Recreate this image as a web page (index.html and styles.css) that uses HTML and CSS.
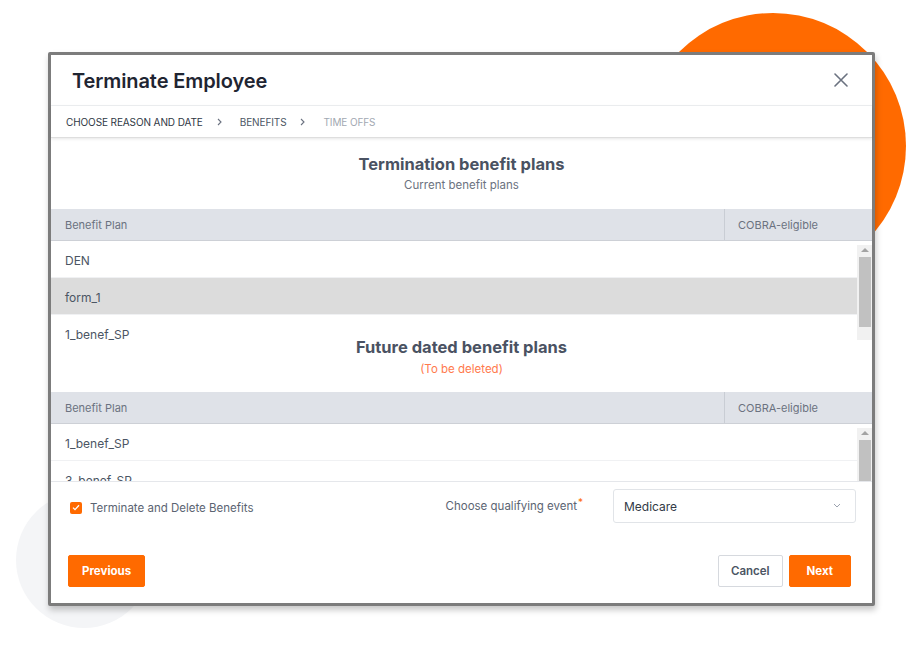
FILE: index.html
```html
<!DOCTYPE html>
<html lang="en">
<head>
<meta charset="utf-8">
<title>Terminate Employee</title>
<link rel="stylesheet" href="styles.css">
</head>
<body>
<div class="page">
  <div class="blob blob-orange"></div>
  <div class="blob blob-gray"></div>
  <div class="modal">
    <div class="modal-header">
      <h1 class="modal-title">Terminate Employee</h1>
      <span class="close" aria-label="Close">
        <svg width="14" height="14" viewBox="0 0 14 14"><path d="M1 1L13 13M13 1L1 13" stroke="#6b7280" stroke-width="1.6" stroke-linecap="round" fill="none"/></svg>
      </span>
    </div>
    <nav class="steps">
      <span class="step step-done">CHOOSE REASON AND DATE</span>
      <svg class="step-sep" width="5" height="8" viewBox="0 0 5 8"><path d="M1 1L4 4L1 7" stroke="#6b7280" stroke-width="1.1" fill="none"/></svg>
      <span class="step step-current">BENEFITS</span>
      <svg class="step-sep" width="5" height="8" viewBox="0 0 5 8"><path d="M1 1L4 4L1 7" stroke="#6b7280" stroke-width="1.1" fill="none"/></svg>
      <span class="step step-next">TIME OFFS</span>
    </nav>

    <section class="plans plans-current">
      <h2 class="plans-title">Termination benefit plans</h2>
      <p class="plans-sub">Current benefit plans</p>
      <div class="table">
        <div class="thead">
          <div class="th th-plan">Benefit Plan</div>
          <div class="th th-cobra">COBRA-eligible</div>
        </div>
        <div class="tbody tbody-tall">
          <div class="rows">
            <div class="row">DEN</div>
            <div class="row row-selected">form_1</div>
            <div class="row">1_benef_SP</div>
          </div>
          <div class="scrollbar">
            <span class="sb-arrow"></span>
            <span class="sb-thumb sb-thumb-a"></span>
          </div>
        </div>
      </div>
    </section>

    <section class="plans plans-future">
      <h2 class="plans-title plans-title-tight">Future dated benefit plans</h2>
      <p class="plans-sub plans-warn">(To be deleted)</p>
      <div class="table">
        <div class="thead">
          <div class="th th-plan">Benefit Plan</div>
          <div class="th th-cobra">COBRA-eligible</div>
        </div>
        <div class="tbody tbody-short">
          <div class="rows">
            <div class="row">1_benef_SP</div>
            <div class="row">3_benef_SP</div>
          </div>
          <div class="scrollbar">
            <span class="sb-arrow"></span>
            <span class="sb-thumb sb-thumb-b"></span>
          </div>
        </div>
      </div>
    </section>

    <div class="modal-footer">
      <div class="form-row">
        <label class="check">
          <span class="check-box">
            <svg width="8" height="7" viewBox="0 0 8 7"><path d="M1 3.6L3 5.6L7 1.2" stroke="#fff" stroke-width="1.3" fill="none"/></svg>
          </span>
          <span class="check-label">Terminate and Delete Benefits</span>
        </label>
        <div class="field">
          <span class="field-label">Choose qualifying event<span class="req">*</span></span>
          <div class="select">
            <span class="select-value">Medicare</span>
            <svg width="8" height="5" viewBox="0 0 8 5"><path d="M1 1L4 4L7 1" stroke="#9ca3af" stroke-width="1" fill="none"/></svg>
          </div>
        </div>
      </div>
      <div class="actions">
        <button class="btn btn-primary">Previous</button>
        <div class="actions-right">
          <button class="btn btn-default">Cancel</button>
          <button class="btn btn-primary">Next</button>
        </div>
      </div>
    </div>
  </div>
</div>
</body>
</html>
```
FILE: styles.css
```css
* { box-sizing: border-box; }
html, body { margin: 0; padding: 0; background: #fff; }
body { font-family: Inter, "Noto Sans", "Liberation Sans", sans-serif; }

.page {
  position: relative;
  width: 916px;
  height: 659px;
  overflow: hidden;
  padding: 52px 0 0 48px;
}

.blob { position: absolute; border-radius: 50%; z-index: 0; }
.blob-orange { width: 266px; height: 266px; left: 640px; top: 13px; background: #ff6a00; }
.blob-gray { width: 136px; height: 136px; left: 16px; top: 492px; background: #f4f5f7; }

.modal {
  position: relative;
  z-index: 1;
  width: 827px;
  border: 3px solid #7c7c7c;
  border-radius: 2px;
  background: #fff;
  box-shadow: 1px 4px 6px rgba(0,0,0,0.22);
  display: flex;
  flex-direction: column;
}

.modal-header {
  height: 51px;
  display: flex;
  align-items: center;
  justify-content: space-between;
  padding: 0 24px 0 21px;
  border-bottom: 1px solid #eef0f2;
}
.modal-title {
  margin: 0;
  font-size: 20px;
  font-weight: 600;
  color: #1f2532;
  letter-spacing: -0.1px;
  padding-top: 1px;
}
.close { display: flex; width: 14px; height: 14px; margin-top: 0; }

.steps {
  height: 32px;
  display: flex;
  align-items: center;
  padding: 0 15px;
  border-bottom: 1px solid #dedede;
  box-shadow: 0 1px 3px rgba(0,0,0,0.10);
  font-size: 10px;
  letter-spacing: -0.1px;
  position: relative;
  z-index: 1;
}
.step { padding-top: 1px; }
.step-sep { margin: 0 18px 0 14px; }
.step-done { color: #2f3744; }
.step-current { color: #4b5563; }
.step-next { color: #a2a8b2; }

.plans { display: flex; flex-direction: column; align-items: stretch; }
.plans-current { padding-top: 14px; }
.plans-title {
  margin: 0;
  text-align: center;
  font-size: 16.5px;
  font-weight: 700;
  color: #4a5262;
  line-height: 24px;
}
.plans-title-tight { line-height: 15px; position: relative; z-index: 1; }
.plans-sub {
  margin: 0 0 15px;
  text-align: center;
  font-size: 11.5px;
  line-height: 18px;
  color: #6b7280;
}
.plans-future .plans-sub { margin: 5px 0 14px; }
.plans-warn { color: #ff7a4d !important; }

.thead {
  display: flex;
  height: 32px;
  background: #dfe2e8;
  border-bottom: 1px solid #cdd0d6;
}
.th {
  display: flex;
  align-items: center;
  font-size: 11px;
  color: #6b7280;
  padding-left: 14px;
}
.th-plan { flex: 1; }
.th-cobra { width: 148px; border-left: 1px solid #c9cdd4; padding-left: 13px; }

.tbody { display: flex; overflow: hidden; }
.tbody-tall { height: 99px; }
.tbody-short { height: 57px; }
.rows { flex: 1; overflow: hidden; }
.row {
  height: 37px;
  display: flex;
  align-items: center;
  padding: 2px 0 0 14px;
  font-size: 12px;
  color: #4b5563;
  border-bottom: 1px solid #f0f1f3;
}
.row-selected { background: #dcdcdc; }

.scrollbar {
  width: 15px;
  margin-top: 4px;
  background: #f1f1f1;
  display: flex;
  flex-direction: column;
  align-items: center;
}
.sb-arrow {
  margin-top: 3px;
  width: 0; height: 0;
  border-left: 4px solid transparent;
  border-right: 4px solid transparent;
  border-bottom: 4px solid #a3a3a3;
}
.sb-thumb { width: 12px; background: #c1c1c1; margin-top: 5px; flex: none; }
.sb-thumb-a { height: 70px; }
.sb-thumb-b { height: 60px; }

.modal-footer {
  border-top: 1px solid #e5e7eb;
  padding: 7px 0 16px;
}
.form-row {
  display: flex;
  align-items: center;
  height: 33px;
  padding: 0 16px 0 19px;
}
.check { display: flex; align-items: center; flex: 1; margin-top: 4px; }
.check-box {
  width: 12px; height: 12px;
  background: #ff6a00;
  border-radius: 2px;
  display: flex; align-items: center; justify-content: center;
}
.check-label { margin-left: 8px; font-size: 11.5px; color: #5b6472; }

.field { display: flex; align-items: center; }
.field-label { font-size: 11.5px; color: #5b6472; margin-right: 30px; margin-top: -3px; }
.req { color: #ff6a00; font-size: 10px; vertical-align: 4px; margin-left: 1px; }
.select {
  width: 243px;
  height: 34px;
  border: 1px solid #e1e4e8;
  border-radius: 3px;
  display: flex;
  align-items: center;
  justify-content: space-between;
  padding: 0 14px 0 10px;
}
.select-value { font-size: 12px; color: #323a46; margin-top: 1px; }

.actions {
  display: flex;
  align-items: center;
  justify-content: space-between;
  margin-top: 33px;
  padding: 0 21px 0 17px;
}
.actions-right { display: flex; gap: 6px; }
.btn {
  font-family: inherit;
  font-size: 11.5px;
  font-weight: 700;
  height: 32px;
  border-radius: 2px;
  cursor: pointer;
}
.btn-primary { background: #ff6a00; color: #fff; border: 1px solid #ff6a00; padding: 0 13px; }
.btn-default { background: #fff; color: #4b5563; border: 1px solid #d6d9de; padding: 0 12px; font-weight: 600; }
.actions-right .btn-primary { padding: 0 17px; }
```
